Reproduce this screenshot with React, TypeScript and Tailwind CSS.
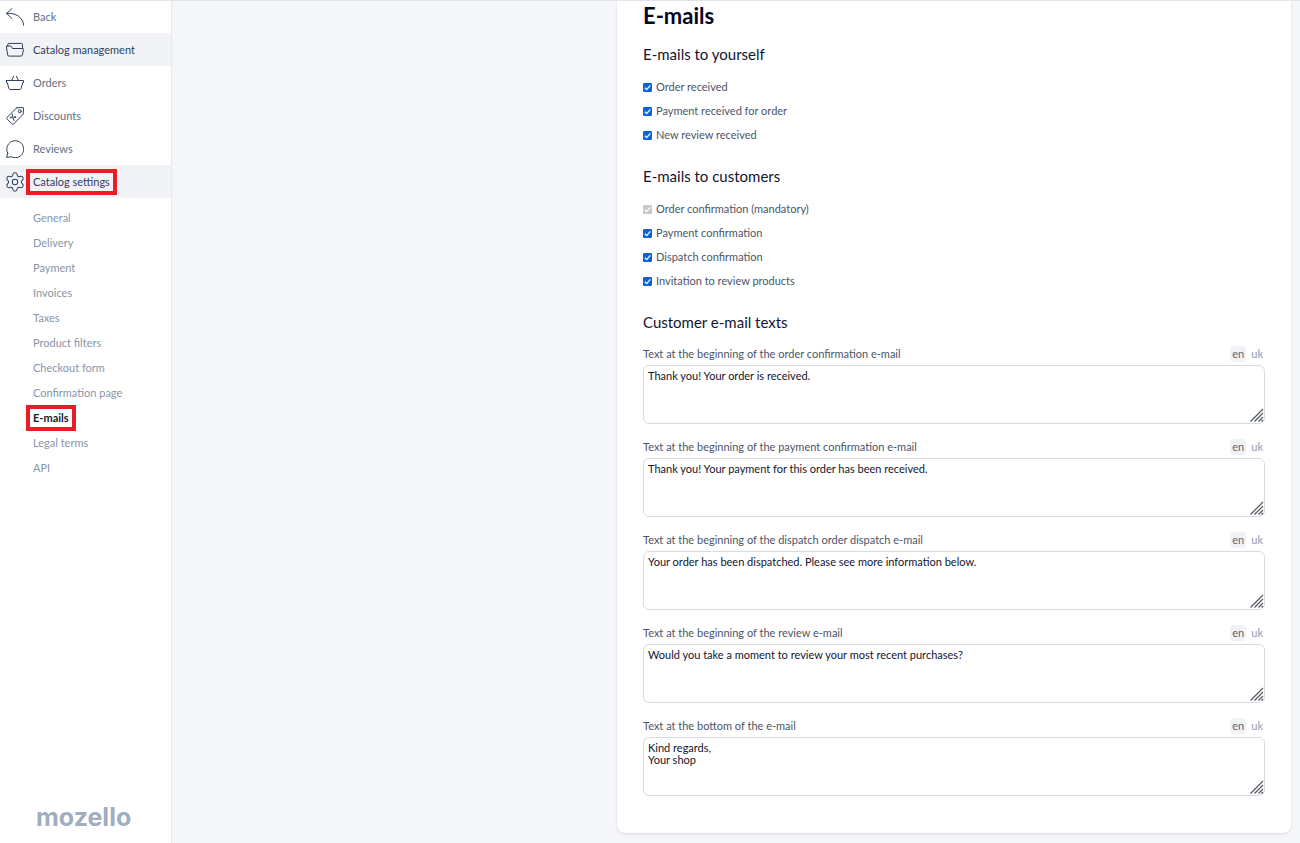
import { useId, useState } from 'react';
import type { FC, ReactNode } from 'react';
import clsx from 'clsx';
import { Settings } from 'lucide-react';

type IconName = 'back' | 'folder' | 'basket' | 'tag' | 'bubble' | 'gear';

type NavItem = {
  label: string;
  icon: IconName;
  active?: boolean;
  marked?: boolean;
};

const NAV: NavItem[] = [
  { label: 'Back', icon: 'back' },
  { label: 'Catalog management', icon: 'folder', active: true },
  { label: 'Orders', icon: 'basket' },
  { label: 'Discounts', icon: 'tag' },
  { label: 'Reviews', icon: 'bubble' },
  { label: 'Catalog settings', icon: 'gear', active: true, marked: true },
];

const SETTINGS = [
  'General',
  'Delivery',
  'Payment',
  'Invoices',
  'Taxes',
  'Product filters',
  'Checkout form',
  'Confirmation page',
  'E-mails',
  'Legal terms',
  'API',
];

const CURRENT = 'E-mails';

const OWN_EMAILS = ['Order received', 'Payment received for order', 'New review received'];

const CUSTOMER_EMAILS = [
  'Payment confirmation',
  'Dispatch confirmation',
  'Invitation to review products',
];

const TEXTS = [
  {
    label: 'Text at the beginning of the order confirmation e-mail',
    value: 'Thank you! Your order is received.',
  },
  {
    label: 'Text at the beginning of the payment confirmation e-mail',
    value: 'Thank you! Your payment for this order has been received.',
  },
  {
    label: 'Text at the beginning of the dispatch order dispatch e-mail',
    value: 'Your order has been dispatched. Please see more information below.',
  },
  {
    label: 'Text at the beginning of the review e-mail',
    value: 'Would you take a moment to review your most recent purchases?',
  },
  { label: 'Text at the bottom of the e-mail', value: 'Kind regards,\nYour shop' },
];

const ICONS: Record<Exclude<IconName, 'gear'>, ReactNode> = {
  back: <path d="M6 .6.6 5.4l5.4 5.2M.6 5.4c9.6-.8 16.4 4 17.2 12" />,
  folder: (
    <>
      <path d="M1.8 4.9V3.4c0-.6.4-1 1-1h12.5c.7 0 1.2.5 1.2 1.2v3.8" />
      <path d="M1.2 5h3.3c.5 0 .8.2 1 .6l.9 1.9h10.4c.5 0 .9.4.8.9L16.3 14c-.1.7-.6 1.1-1.3 1.1H3c-.7 0-1.2-.4-1.3-1.1L.4 5.9c-.1-.5.3-.9.8-.9Z" />
    </>
  ),
  basket: (
    <>
      <path d="M.5 6.5h17v2.2h-.8l-1.6 5.8c-.2.6-.6 1-1.2 1H4.1c-.6 0-1-.4-1.2-1L1.3 8.7H.5V6.5Z" />
      <path d="m5.6 6.4 2-4.2M12.4 6.4l-2-4.2" />
    </>
  ),
  tag: (
    <>
      <path d="M10.8.8 17 .5c.3 0 .5.2.5.5l-.3 6.2-9.6 9.9c-.4.4-.9.4-1.3 0L.9 11.8c-.4-.4-.4-.9 0-1.3L10.8.8Z" />
      <circle cx="13.7" cy="4.3" r="1.5" />
      <path d="m6.2 7.2 1.6 6.2" />
      <circle cx="5" cy="10.5" r=".7" />
      <circle cx="9" cy="10.2" r=".7" />
    </>
  ),
  bubble: <path d="M1.7 13.2A8.5 8.5 0 1 1 5.2 16.7L.7 17.5l1-4.3Z" />,
};

const Icon: FC<{ name: IconName }> = ({ name }) => {
  if (name === 'gear') {
    return <Settings className="-m-0.5 size-[22px] shrink-0 text-[#2f4160]" strokeWidth={1.1} aria-hidden="true" />;
  }

  return (
    <svg
      viewBox="0 0 18 18"
      className="size-[18px] shrink-0 text-[#2f4160]"
      fill="none"
      stroke="currentColor"
      strokeWidth="1"
      strokeLinejoin="round"
      strokeLinecap="round"
      aria-hidden="true"
    >
      {ICONS[name]}
    </svg>
  );
};

// Label with a red frame drawn around it, outside of the text flow.
const Marked: FC<{ children: ReactNode }> = ({ children }) => (
  <span className="relative">
    {children}
    <span className="absolute -inset-x-[7px] -inset-y-[5px] border-4 border-[#ec1c24]" />
  </span>
);

const Sidebar: FC = () => (
  <aside className="flex w-[172px] shrink-0 flex-col border-r border-[#e6e8ec] bg-white">
    <nav>
      {NAV.map((item) => (
        <a
          key={item.label}
          href="#"
          className={clsx(
            'flex h-[33px] items-center gap-[9px] pl-1.5',
            item.active ? 'bg-[#f1f3f7] text-[#2f4160]' : 'text-[#637083]',
          )}
        >
          <Icon name={item.icon} />
          {item.marked ? <Marked>{item.label}</Marked> : item.label}
        </a>
      ))}
      <div className="mt-[7px]">
        {SETTINGS.map((label) => (
          <a
            key={label}
            href="#"
            className={clsx(
              'flex h-[25px] items-center pl-[33px]',
              label === CURRENT ? 'font-bold text-[#1a202c]' : 'text-[#8795a8]',
            )}
          >
            {label === CURRENT ? <Marked>{label}</Marked> : label}
          </a>
        ))}
      </div>
    </nav>
    <div className="mt-auto pb-2.5 pl-9 font-[Inter] text-[25px] leading-8 font-bold text-[#a0aec0]">mozello</div>
  </aside>
);

const Checkbox: FC<{ label: string; disabled?: boolean }> = ({ label, disabled }) => {
  const [checked, setChecked] = useState(true);

  return (
    <label className="flex h-6 items-center gap-1 text-[#4a5568]">
      <span className="relative flex size-[9px]">
        <input
          type="checkbox"
          checked={checked}
          disabled={disabled}
          onChange={(e) => setChecked(e.target.checked)}
          className="size-[9px] appearance-none rounded-[1px] border border-gray-500 checked:border-[#0b62e0] checked:bg-[#0b62e0] disabled:border-[#c6c8cd] disabled:bg-[#c6c8cd]"
        />
        {checked && (
          <svg viewBox="0 0 9 9" className="pointer-events-none absolute inset-0" fill="none" stroke="#fff" strokeWidth="1.3">
            <path d="m1.8 4.7 1.9 1.9L7.3 2.4" />
          </svg>
        )}
      </span>
      {label}
    </label>
  );
};

const TextField: FC<{ label: string; value: string }> = ({ label, value }) => {
  const id = useId();

  return (
    <div>
      <div className="flex h-[19px] items-center justify-between">
        <label htmlFor={id} className="text-[#4a5568]">
          {label}
        </label>
        <div className="flex gap-[3px]">
          <button type="button" className="h-4 rounded bg-[#f1f2f6] px-0.5 text-[#5f6673]">
            en
          </button>
          <button type="button" className="h-4 px-0.5 text-[#8f9db0]">
            uk
          </button>
        </div>
      </div>
      <div className="relative mt-0.5">
        <textarea
          id={id}
          defaultValue={value}
          className="block h-[59px] w-full resize-none rounded-md border border-[#d5dce6] bg-white p-1 leading-3 text-[#12152e] outline-none"
        />
        <svg
          viewBox="0 0 14 14"
          className="pointer-events-none absolute right-px bottom-0.5 size-3.5"
          stroke="#55585e"
          strokeWidth="1.2"
          fill="none"
        >
          <path d="M.5 13.5 13 1M4.5 13.5 13 5M8.5 13.5 13 9M11.5 13.5 13 12" />
        </svg>
      </div>
    </div>
  );
};

const Heading: FC<{ children: ReactNode }> = ({ children }) => (
  <h2 className="text-[15px] leading-5 text-[#12152e]">{children}</h2>
);

export default function App() {
  return (
    <div className="relative flex min-h-screen bg-[#f5f6f9] font-[Lato,sans-serif] text-[11px] leading-4">
      <div className="absolute inset-x-0 top-0 h-px bg-[#e2e4e8]" />
      <Sidebar />
      <main className="flex min-w-0 flex-1 items-start pr-[9px] pb-[9px]">
        <div className="min-w-0 shrink basis-[445px]" />
        <section className="min-w-0 flex-1 rounded-b-lg bg-white px-[26px] pb-[37px] shadow">
          <h1 className="pt-0.5 text-[22px] leading-7 font-bold text-[#05071f]">E-mails</h1>

          <div className="mt-3.5">
            <Heading>E-mails to yourself</Heading>
            <div className="mt-[11px]">
              {OWN_EMAILS.map((label) => (
                <Checkbox key={label} label={label} />
              ))}
            </div>
          </div>

          <div className="mt-[19px]">
            <Heading>E-mails to customers</Heading>
            <div className="mt-[11px]">
              <Checkbox label="Order confirmation (mandatory)" disabled />
              {CUSTOMER_EMAILS.map((label) => (
                <Checkbox key={label} label={label} />
              ))}
            </div>
          </div>

          <div className="mt-[19px]">
            <Heading>Customer e-mail texts</Heading>
            <div className="mt-3 flex flex-col gap-[13px]">
              {TEXTS.map((text) => (
                <TextField key={text.label} label={text.label} value={text.value} />
              ))}
            </div>
          </div>
        </section>
      </main>
    </div>
  );
}
